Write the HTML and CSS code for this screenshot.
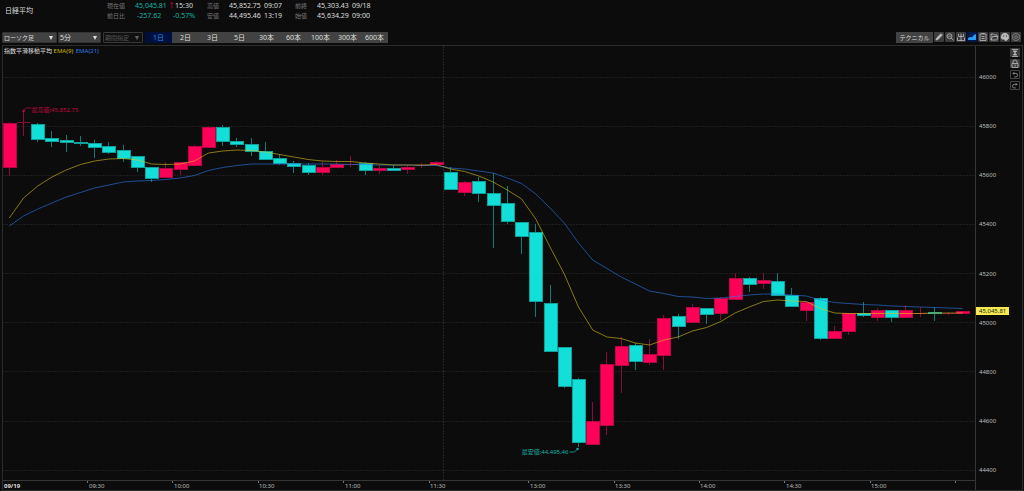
FILE: index.html
```html
<!DOCTYPE html>
<html lang="ja">
<head>
  <meta charset="UTF-8" />
  <title>日経平均 チャート</title>
  <link rel="stylesheet" href="styles.css">
</head>
<body>
  <header class="quote">
    <h1>日経平均</h1>
    <div class="quote-group now">
      <span class="label">現在値</span><span class="num down">45,045.81</span><span class="time"><span class="arrow">↑</span>15:30</span>
      <span class="label">前日比</span><span class="num down diff">-257.62</span><span class="time down">-0.57%</span>
    </div>
    <div class="quote-group">
      <span class="label">高値</span><span class="num">45,852.75</span><span class="time">09:07</span>
      <span class="label">安値</span><span class="num">44,495.46</span><span class="time">13:19</span>
    </div>
    <div class="quote-group">
      <span class="label">前終</span><span class="num">45,303.43</span><span class="time">09/18</span>
      <span class="label">始値</span><span class="num">45,634.29</span><span class="time">09:00</span>
    </div>
  </header>

  <nav class="toolbar">
    <div class="picker picker-type"><select aria-label="チャート種類"><option>ローソク足</option></select></div>
    <div class="picker picker-span"><select aria-label="足"><option>5分</option></select></div>
    <div class="picker picker-range"><select aria-label="期間指定" disabled><option>期間指定</option></select></div>
    <div class="ranges">
      <button class="active">1日</button>
      <button>2日</button>
      <button>3日</button>
      <button>5日</button>
      <button>30本</button>
      <button>60本</button>
      <button>100本</button>
      <button>300本</button>
      <button>600本</button>
    </div>
    <div class="tools">
      <button class="technical">テクニカル</button>
      <button class="icon" aria-label="描画"><svg viewBox="0 0 10 10"><path d="M2 8l.6-2L7 1.7 8.3 3 4 7.4z" fill="#bbb"/></svg></button>
      <button class="icon" aria-label="拡大"><svg viewBox="0 0 10 10"><circle cx="4.5" cy="4.2" r="2.4"/><path d="M6.3 6l2.2 2.4M3.3 4.2h2.4"/></svg></button>
      <button class="icon" aria-label="出力"><svg viewBox="0 0 10 10"><path d="M5 1.500v7M2.500 2v2.500h5V2M1.500 5.500v3h7v-3"/></svg></button>
      <button class="icon active" aria-label="チャート"><svg viewBox="0 0 10 10"><path d="M1 8V6l2-1 2 .3L7 3l2-1v6z" fill="#2a9cf5" stroke="none"/></svg></button>
      <button class="icon" aria-label="一覧"><svg viewBox="0 0 10 10"><path d="M2 2h6v6.500H2zM3.500 1.500h3M3.500 4.500h3M3.500 6.500h3"/></svg></button>
      <button class="icon" aria-label="開く"><svg viewBox="0 0 10 10"><path d="M2 8V2h2.500l1 1H8v1.500M2 8l1.500-3.500H9L7.800 8z"/></svg></button>
      <button class="icon" aria-label="配色"><svg viewBox="0 0 10 10"><path d="M5 1.300C2.700 1.300 1.200 3 1.200 4.900c0 2 1.500 2.500 2.500 2.200.8-.2.8 1.600 2 1.500 1.800-.2 3-2 3-3.800C8.700 2.800 7 1.300 5 1.300z" fill="#bbb"/><circle cx="3.500" cy="4" r=".4" stroke="#444"/><circle cx="6.400" cy="4" r=".4" stroke="#444"/></svg></button>
      <button class="icon" aria-label="設定"><svg viewBox="0 0 10 10" class="soft"><path d="M5 1.200l3.300 1.900v3.800L5 8.800 1.700 6.900V3.100z"/><circle cx="5" cy="5" r="1.400"/></svg></button>
    </div>
  </nav>

  <main class="panel">
    <div class="plot">
      <p class="legend">指数平滑移動平均 <span class="ema9">EMA(9)</span> <span class="ema21">EMA(21)</span></p>
      <svg id="chart" role="img" aria-label="日経平均 5分足"></svg>
    </div>
    <aside class="side">
      <button class="icon" aria-label="縦幅調整"><svg viewBox="0 0 10 10"><path d="M2 1.500h6M2 8.500h6M3.300 3h3.400L5 4.800zM3.300 7h3.400L5 5.200z" fill="#bbb"/></svg></button>
      <button class="icon" aria-label="固定"><svg viewBox="0 0 10 10"><path d="M3 4.500V3a2 2 0 0 1 4 0v1.500"/><path d="M2 4.500h6v4H2z"/><path d="M5 5.500v2"/></svg></button>
      <button class="icon dark" aria-label="元に戻す"><svg viewBox="0 0 10 10"><path d="M2.500 3H6a2.200 2.200 0 0 1 0 4.400H4M4 1.500L2.500 3 4 4.500"/></svg></button>
      <button class="icon dark" aria-label="やり直し"><svg viewBox="0 0 10 10"><path d="M7.500 3H4a2.200 2.200 0 0 0 0 4.400h2M6 1.500L7.500 3 6 4.500"/></svg></button>
    </aside>
  </main>

  <script src="chart.js"></script>
</body>
</html>
```
FILE: styles.css
```css
* {
  box-sizing: border-box;
}

body {
  margin: 0;
  min-height: 100vh;
  display: flex;
  flex-direction: column;
  background: #0c0c0c;
  color: #ddd;
  font-family: "Noto Sans", "Noto Sans CJK JP", sans-serif;
  font-size: 6px;
  line-height: 10px;
}

button, select {
  font: inherit;
  color: #ddd;
  border: none;
  border-radius: 0;
  margin: 0;
  padding: 0;
  background: #424242;
}

/* quote header */
.quote {
  display: flex;
  height: 32px;
  padding: 1px 5px 0;
}

.quote h1 {
  width: 102px;
  margin: 5px 0 0;
  font-size: 7px;
  font-weight: normal;
}

.quote-group {
  display: grid;
  grid-template-columns: 22px 35px 31px;
  grid-auto-rows: 10px;
  align-content: start;
  font-size: 7px;
}

.quote-group.now {
  grid-template-columns: 28px 33px 39px;
}

.label {
  color: #777;
  font-size: 6px;
}

.down {
  color: #12b5a6;
}

.now .time {
  padding-left: 7px;
}

.now .time.down {
  padding-left: 5px;
}

.diff {
  padding-left: 2px;
}

.arrow {
  display: inline-block;
  width: 7px;
  margin-left: -7px;
  color: #e0004c;
}

/* toolbar */
.toolbar {
  display: flex;
  height: 13px;
  padding: 0 3px 2px 2px;
}

.picker {
  position: relative;
  height: 11px;
  margin-right: 1px;
}

.picker select {
  width: 100%;
  height: 11px;
  padding: 0 1px;
  appearance: none;
  border: 1px solid #333;
  border-radius: 1px;
}

.picker::after {
  content: "";
  position: absolute;
  right: 4px;
  top: 4px;
  border: 2px solid transparent;
  border-top: 4px solid #ddd;
  border-bottom: none;
}

.picker-type {
  width: 55px;
}

.picker-span {
  width: 43px;
}

.picker-span select {
  font-size: 7px;
}

.picker-range {
  width: 40px;
  margin: 0 2px 0 1px;
}

.picker-range select {
  background: #111;
  border-color: #383838;
  color: #555;
  opacity: 1;
}

.picker-range::after {
  border-top-color: #666;
}

.ranges button {
  float: left;
  width: 27px;
  height: 11px;
  font-size: 7px;
}

.ranges .active {
  background: #00103c;
  color: #1c8ee8;
}

.tools {
  display: flex;
  gap: 1px;
  margin-left: auto;
}

.technical {
  width: 37px;
  height: 11px;
}

.icon {
  display: block;
  width: 10px;
  height: 10px;
  border-radius: 1px;
  background: #3c3c3c;
}

.icon svg {
  display: block;
  width: 10px;
  height: 10px;
  fill: none;
  stroke: #bbb;
  stroke-width: 0.8;
}

.icon .soft {
  stroke: #888;
}

.icon.active {
  background: #001a50;
}

.icon.dark {
  background: #0c0c0c;
  border: 1px solid #444;
}

.icon.dark svg {
  width: 8px;
  height: 8px;
}

/* chart */
.panel {
  flex: 1;
  display: flex;
  margin: 0 1px 0 2px;
  border: 1px solid #2c2c2c;
}

.plot {
  flex: 1;
  position: relative;
  min-height: 240px;
}

.legend {
  position: absolute;
  left: 1px;
  top: 0;
  margin: 0;
}

.ema9 {
  color: #c9b800;
}

.ema21 {
  margin-left: 1px;
  color: #2b7be6;
}

#chart {
  position: absolute;
  width: 100%;
  height: 100%;
}

.side {
  display: flex;
  flex-direction: column;
  gap: 2px;
  width: 13px;
  padding: 2px 1px 0;
}

.side .icon {
  height: 9px;
}

#chart text {
  fill: #bdbdbd;
  font-size: 6px;
}

#chart .date {
  fill: #ddd;
  font-weight: bold;
}

#chart .high-text {
  fill: #c0083f;
}

#chart .low-text {
  fill: #12b5a6;
  text-anchor: end;
}

#chart .tag-text {
  fill: #222;
}

#chart .grid {
  stroke: #1d1d1d;
  stroke-dasharray: 2 1;
}

#chart .session {
  stroke: #262626;
  stroke-dasharray: 2 1;
}

#chart .axis {
  stroke: #363636;
}

#chart .tick {
  stroke: #777;
}

#chart .body-up {
  fill: #ff0059;
  stroke: #b80443;
}

#chart .body-down {
  fill: #13dfd9;
  stroke: #109f9a;
}

#chart .wick-up {
  stroke: #8c0a38;
}

#chart .wick-down {
  stroke: #107a76;
}

#chart .line9, #chart .line21 {
  fill: none;
  stroke-opacity: 0.6;
}

#chart .line9 {
  stroke: #d8c31c;
}

#chart .line21 {
  stroke: #2b78e8;
}

#chart .high {
  fill: #c0083f;
}

#chart .low {
  fill: #12b5a6;
}

#chart .high-line {
  fill: none;
  stroke: #8c0a38;
}

#chart .low-line {
  fill: none;
  stroke: #0f8f85;
}

#chart .tag {
  fill: #f5ea52;
}
```
FILE: chart.js
```js
// chart space: x 3..976, y 46..481, stretched to the plot box
const LEFT = 3, RIGHT = 976, TOP = 46, BOTTOM = 481;
const AXIS_W = 33, TIME_H = 9;
const FIRST = 9.3, STEP = 14.23;

// [up, high, top, bottom, low]
const candles = [
  [1,122,123,167,175], [1,112,122,122,135], [0,123,124,139,141], [0,131,138,141,146],
  [0,135,140,142,151], [0,136,142,143,145], [0,140,143,147,157], [0,142,146,152,153],
  [0,145,150,158,161], [0,156,156,167,171], [0,167,167,178,181], [1,162,168,177,177],
  [1,162,162,169,174], [1,145,146,165,165], [1,126,127,147,147], [0,125,127,141,145],
  [0,138,141,144,146], [0,138,144,151,155], [0,142,151,159,159], [0,154,158,163,164],
  [0,161,163,166,172], [0,163,165,172,174], [1,161,167,172,174], [1,160,164,167,167],
  [1,156,164,164,166], [0,162,163,170,174], [1,165,168,170,173], [0,165,168,170,170],
  [1,165,167,169,173], [1,163,165,165,167], [1,161,162,164,165], [0,167,172,189,189],
  [1,181,182,192,195], [0,177,181,193,201], [0,173,193,205,247], [0,186,203,221,223],
  [0,222,222,236,253], [0,224,232,301,316], [0,285,303,351,351], [0,347,347,386,387],
  [0,378,379,442,446], [1,402,421,444,444], [1,352,364,425,434], [1,337,346,365,392],
  [0,343,345,361,369], [1,339,354,362,364], [1,315,318,355,369], [0,314,316,326,338],
  [1,304,307,322,322], [0,308,308,314,323], [1,297,298,313,319], [1,273,278,299,299],
  [0,277,278,284,291], [1,273,280,283,288], [0,273,281,295,295], [0,288,295,306,306],
  [1,301,302,310,320], [0,297,298,338,339], [1,326,331,338,338], [1,313,313,331,334],
  [0,302,313,315,316], [1,308,310,317,320], [0,310,310,317,321], [1,305,310,317,317],
  [1,307,313,313,316], [0,307,312,313,320], [1,312,313,313,314], [1,311,311,313,313]
];

const ema9 = [218,198,186,177,170,164.5,161,159,158.5,160,164,164.5,164,161,153,151,150,150.5,152,
  154.5,157,159.5,161,161.5,161.5,163,164,165,165,165,164.5,169,171.5,176,182,190,199,219,247,274,
  307,330,337,338.5,343,345,340,337,331,327.5,321.5,313,307,301.5,300,301,301.5,308.5,313,313.5,
  313.5,313.5,313.5,313.5,313.5,313,313,313];

const ema21 = [226,216,209,203,197,192.5,188,185,182,181,180.5,179.5,178,175.5,170.5,167.5,165.5,164,
  164,164,164,164,164,164,164.5,164.5,165,165,165,165.5,165.5,168,169,171,173,178,183.5,194,208,
  223,243,260,268.5,277,284,291,293.5,296.5,297,298.5,298,296.5,295,294,294,295,296,300,302.5,
  303.5,304.5,305,306,306.5,307,307.5,308,308.5];

const times = [[6, "09:30"], [12, "10:00"], [18, "10:30"], [24, "11:00"], [30, "11:30"], [37, "13:00"],
  [43, "13:30"], [49, "14:00"], [55, "14:30"], [61, "15:00"], [67, ""]];

const svg = document.getElementById("chart");

function add(name, attrs, text) {
  const el = document.createElementNS("http://www.w3.org/2000/svg", name);
  for (const key in attrs) el.setAttribute(key, attrs[key]);
  if (text) el.textContent = text;
  svg.appendChild(el);
}

function line(cls, x1, y1, x2, y2) {
  add("line", { class: cls, x1, y1, x2, y2 });
}

function draw() {
  const box = svg.getBoundingClientRect();
  const w = box.width - AXIS_W;
  const h = box.height - TIME_H;
  const sx = x => (x - LEFT) * w / (RIGHT - LEFT);
  const sy = y => (y - TOP) * h / (BOTTOM - TOP);
  const mid = v => Math.floor(v) + 0.5;
  const cx = i => sx(FIRST + STEP * i);
  svg.innerHTML = "";

  for (let price = 46000; price >= 44400; price -= 200) {
    const y = sy(77 + (46000 - price) * 0.2458);
    line("grid", 0, mid(y), w, mid(y));
    add("text", { x: w + 3, y: Math.round(y) + 2 }, String(price));
  }
  line("session", mid(sx(443)), 0, mid(sx(443)), h);
  line("axis", 0, mid(h - 1), w, mid(h - 1));
  line("axis", mid(w - 1), 0, mid(w - 1), box.height);

  add("text", { class: "date", x: 1, y: h + 7 }, "09/19");
  times.forEach(([i, label]) => {
    const x = cx(i - 0.5);
    line("tick", mid(x), h, mid(x), h + 2);
    if (label) add("text", { x: Math.round(x) + 1, y: h + 7 }, label);
  });

  candles.forEach(([up, high, top, bottom, low], i) => {
    const dir = up ? "up" : "down";
    const x = mid(cx(i));
    line("wick-" + dir, x, sy(high), x, sy(low) + 1);
    if (bottom - top < 1) {
      line("wick-" + dir, x - 6, mid(sy(top)), x + 7, mid(sy(top)));
    } else {
      add("rect", { class: "body-" + dir, x: x - 6, y: mid(sy(top)), width: 13, height: Math.round(sy(bottom) - sy(top)) });
    }
  });

  const points = list => list.map((y, i) => cx(i) + "," + sy(y)).join(" ");
  add("polyline", { class: "line21", points: points(ema21) });
  add("polyline", { class: "line9", points: points(ema9) });

  // day high and low
  const hx = cx(1), hy = sy(110);
  add("circle", { class: "high", cx: hx, cy: hy + 1, r: 1.2 });
  add("path", { class: "high-line", d: `M${hx} ${hy}l3 -2h5` });
  add("text", { class: "high-text", x: hx + 8, y: hy + 2 }, "最高値:45,852.75");
  const lx = cx(40), ly = sy(449);
  add("circle", { class: "low", cx: lx - 1, cy: ly, r: 1.2 });
  add("path", { class: "low-line", d: `M${lx - 1} ${ly}l-3 3h-5` });
  add("text", { class: "low-text", x: lx - 10, y: ly + 5 }, "最安値:44,495.46");

  // last price
  const py = Math.round(sy(311));
  add("rect", { class: "tag", x: w, y: py - 4, width: AXIS_W, height: 8 });
  add("text", { class: "tag-text", x: w + 3, y: py + 2 }, "45,045.81");
}

draw();
window.addEventListener("resize", draw);
```
